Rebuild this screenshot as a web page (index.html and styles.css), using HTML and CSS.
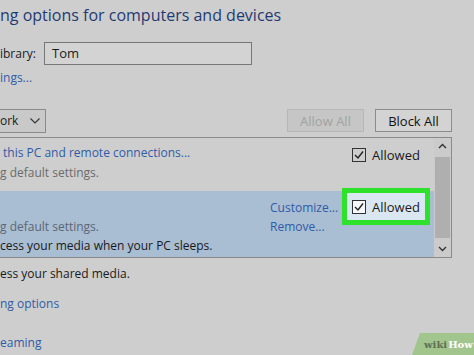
FILE: index.html
```html
<!DOCTYPE html>
<html lang="en">
<head>
    <meta charset="UTF-8">
    <meta name="viewport" content="width=device-width, initial-scale=1.0">
    <title>Media streaming options</title>
    <link rel="stylesheet" href="styles.css">
</head>
<body>

<div class="window">
    <h1 class="title">ng options for computers and devices</h1>

    <div class="field">
        <label for="libraryName">ibrary:</label>
        <div class="textbox" id="libraryName">Tom</div>
    </div>
    <a class="link settings-link" href="#">ings...</a>

    <div class="toolbar">
        <div class="dropdown">
            <span>ork</span>
            <svg class="chevron" width="10" height="6" viewBox="0 0 10 6"><polyline points="0.5,0.5 5,5 9.5,0.5" fill="none" stroke="#333" stroke-width="1.1"/></svg>
        </div>
        <button class="btn btn-disabled" disabled>Allow All</button>
        <button class="btn">Block All</button>
    </div>

    <div class="device-list">
        <div class="rows">
            <div class="row">
                <div class="main">
                    <a class="link line indent" href="#">this PC and remote connections...</a>
                    <div class="line muted">g default settings.</div>
                </div>
                <div class="actions"></div>
                <div class="allow">
                    <svg class="checkbox" width="14" height="14" viewBox="0 0 14 14"><rect x="0.5" y="0.5" width="13" height="13" fill="none" stroke="#333"/><polyline points="3,7 6,10 11,3.5" fill="none" stroke="#222" stroke-width="1.4"/></svg>
                    <span>Allowed</span>
                </div>
            </div>
            <div class="row selected">
                <div class="main">
                    <div class="line"></div>
                    <div class="line muted">g default settings.</div>
                    <div class="line">cess your media when your PC sleeps.</div>
                </div>
                <div class="actions">
                    <a class="link line" href="#">Customize...</a>
                    <a class="link line" href="#">Remove...</a>
                </div>
                <div class="allow marked">
                    <svg class="checkbox" width="14" height="14" viewBox="0 0 14 14"><rect x="0.5" y="0.5" width="13" height="13" fill="#f4f8fb" stroke="#333"/><polyline points="3,7 6,10 11,3.5" fill="none" stroke="#222" stroke-width="1.4"/></svg>
                    <span>Allowed</span>
                </div>
            </div>
        </div>
        <div class="scrollbar">
            <svg class="arrow" width="17" height="17" viewBox="0 0 17 17"><polyline points="5,10 8.5,6.5 12,10" fill="none" stroke="#333" stroke-width="1.4"/></svg>
            <div class="thumb"></div>
            <svg class="arrow" width="17" height="17" viewBox="0 0 17 17"><polyline points="5,7 8.5,10.5 12,7" fill="none" stroke="#333" stroke-width="1.4"/></svg>
        </div>
    </div>

    <p class="note">ess your shared media.</p>
    <a class="link bottom-link" href="#">ng options</a>
    <a class="link bottom-link last-link" href="#">eaming</a>

    <div class="badge"><span class="wiki">wiki</span><span class="how">How</span></div>
</div>

</body>
</html>
```

FILE: styles.css
```css
body {
    margin: 0;
    background-color: #cecece;
}

.window {
    position: relative;
    width: 474px;
    height: 355px;
    overflow: hidden;
    background-color: #cecece;
    font-family: "Open Sans", "Noto Sans", sans-serif;
    font-size: 12px;
    color: #1a1a1a;
}

.title {
    margin: 0;
    padding-top: 3px;
    font-size: 16px;
    font-weight: normal;
    line-height: 24px;
    color: #1f3b72;
}

.field {
    display: flex;
    align-items: center;
    margin-top: 14px;
    height: 24px;
}

.field label {
    width: 44px;
}

.textbox {
    box-sizing: border-box;
    width: 208px;
    height: 23px;
    padding: 0 7px;
    line-height: 21px;
    font-size: 13px;
    border: 1px solid #777;
    background-color: #d3d3d3;
}

.link {
    display: block;
    color: #2f5ca6;
    text-decoration: none;
}

.settings-link {
    margin-top: 4px;
    line-height: 18px;
}

.toolbar {
    display: flex;
    align-items: center;
    gap: 11px;
    margin-top: 22px;
    padding-right: 22px;
    height: 23px;
}

.dropdown {
    box-sizing: border-box;
    display: flex;
    align-items: center;
    justify-content: space-between;
    width: 46px;
    height: 24px;
    padding-right: 5px;
    border: 1px solid #8a8a8a;
    border-left: none;
    background-color: #c9c9c9;
    margin-right: auto;
}

.btn {
    box-sizing: border-box;
    width: 77px;
    height: 23px;
    padding: 0;
    font-family: inherit;
    font-size: 13px;
    color: #111;
    background-color: #d3d3d3;
    border: 1px solid #8c8c8c;
}

.btn-disabled {
    color: #a2a2a2;
    background-color: #c6c6c6;
    border-color: #b8b8b8;
}

.device-list {
    box-sizing: border-box;
    display: flex;
    width: 452px;
    height: 121px;
    margin-top: 5px;
    border: 1px solid #8a8a8a;
    border-left: none;
}

.rows {
    width: 434px;
}

.row {
    display: grid;
    grid-template-columns: 270px 77px 78px;
    height: 53px;
}

.row.selected {
    height: 66px;
    background-color: #a9bdd3;
}

.main {
    padding-top: 5px;
}

.line {
    height: 20px;
    line-height: 20px;
}

.selected .main,
.selected .actions {
    padding-top: 7px;
}

.selected .line {
    height: 19px;
    line-height: 19px;
}

.indent {
    padding-left: 3px;
}

.muted {
    color: #6b6b6b;
}

.selected .muted {
    color: #5c6774;
}

.allow {
    display: flex;
    align-items: center;
    gap: 6px;
    height: 27px;
    margin-top: 3px;
    padding-left: 5px;
    font-size: 13px;
}

.allow.marked {
    margin-top: 2px;
    background-color: #dae6f1;
    outline: 5px solid #2ee22c;
}

.scrollbar {
    display: flex;
    flex-direction: column;
    width: 17px;
    background-color: #cbcbcb;
}

.thumb {
    flex: 1;
    margin: 2px 1px;
    background-color: #afafaf;
}

.note {
    margin: 7px 0 0;
    line-height: 18px;
}

.bottom-link {
    margin-top: 12px;
    line-height: 18px;
}

.last-link {
    margin-top: 21px;
}

.badge {
    position: absolute;
    right: 0;
    bottom: 0;
    width: 62px;
    height: 22px;
    padding-left: 12px;
    box-sizing: border-box;
    display: flex;
    align-items: center;
    clip-path: polygon(8px 0, 100% 0, 100% 100%, 0 100%);
    background-color: #a2c48d;
    font-family: "DejaVu Serif", serif;
    font-size: 10px;
    font-weight: bold;
}

.wiki {
    color: #5f6f55;
}

.how {
    color: #fff;
    margin-left: 1px;
}
```
